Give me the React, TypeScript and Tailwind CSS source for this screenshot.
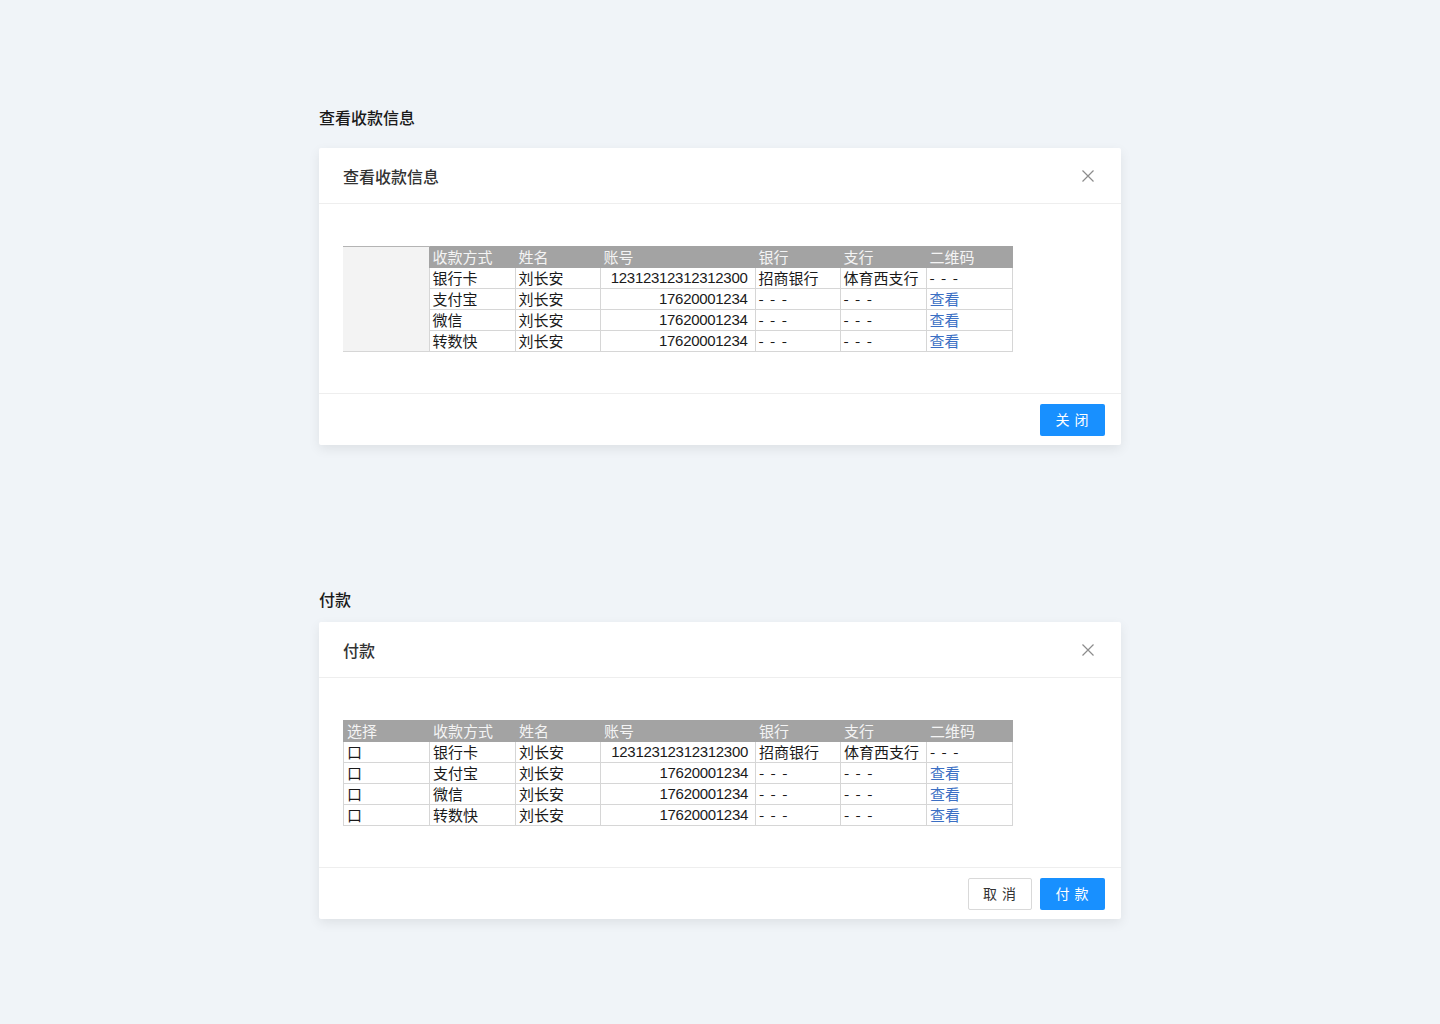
import React from 'react';

type Row = { method: string; name: string; account: string; bank: string; branch: string; qr: string };

const rows: Row[] = [
  { method: '银行卡', name: '刘长安', account: '12312312312312300', bank: '招商银行', branch: '体育西支行', qr: '- - -' },
  { method: '支付宝', name: '刘长安', account: '17620001234', bank: '- - -', branch: '- - -', qr: '查看' },
  { method: '微信', name: '刘长安', account: '17620001234', bank: '- - -', branch: '- - -', qr: '查看' },
  { method: '转数快', name: '刘长安', account: '17620001234', bank: '- - -', branch: '- - -', qr: '查看' },
];

const cell = 'h-[21px] p-0 pl-[3px] border border-[#d6d6d6] text-[15px] leading-[20px] text-[#1a1a1a] whitespace-nowrap overflow-hidden';
const head = 'h-[21px] p-0 pl-[3px] border border-[#a3a3a3] bg-[#a3a3a3] text-[15px] leading-[20px] text-[#f4f4f4] font-normal text-left whitespace-nowrap';

function CloseIcon() {
  return (
    <svg width="14" height="14" viewBox="0 0 14 14" fill="none" stroke="#8c8c8c" strokeWidth="1.2">
      <path d="M1.5 1.5 L12.5 12.5 M12.5 1.5 L1.5 12.5" />
    </svg>
  );
}

function Text({ v }: { v: string }) {
  if (v === '查看') return <span className="text-[#3b6fc4]">查看</span>;
  if (v === '- - -') return <span className="tracking-[1.5px]">- - -</span>;
  return <>{v}</>;
}

function PayTable({ selectable }: { selectable: boolean }) {
  return (
    <table className="border-collapse table-fixed w-[669px] font-['Noto_Sans_CJK_SC','Noto_Sans',sans-serif]">
      <colgroup>
        <col className="w-[86px]" />
        <col className="w-[86px]" />
        <col className="w-[85px]" />
        <col className="w-[155px]" />
        <col className="w-[85px]" />
        <col className="w-[86px]" />
        <col className="w-[86px]" />
      </colgroup>
      <tbody>
        <tr>
          {selectable ? (
            <th className={head}>选择</th>
          ) : (
            <td rowSpan={5} className="p-0 bg-[#f3f3f3] border-t border-t-[#b4b4b4] border-b border-b-[#d6d6d6]" />
          )}
          <th className={head}>收款方式</th>
          <th className={head}>姓名</th>
          <th className={head}>账号</th>
          <th className={head}>银行</th>
          <th className={head}>支行</th>
          <th className={head}>二维码</th>
        </tr>
        {rows.map((r, i) => (
          <tr key={i}>
            {selectable && <td className={cell}>口</td>}
            <td className={cell}>{r.method}</td>
            <td className={cell}>{r.name}</td>
            <td className={`${cell} text-right pr-[7px] font-['Liberation_Sans','Noto_Sans_CJK_SC',sans-serif] tracking-[-0.3px]`}>
              {r.account}
            </td>
            <td className={cell}><Text v={r.bank} /></td>
            <td className={cell}><Text v={r.branch} /></td>
            <td className={cell}><Text v={r.qr} /></td>
          </tr>
        ))}
      </tbody>
    </table>
  );
}

function Modal({
  title,
  selectable,
  children,
}: {
  title: string;
  selectable: boolean;
  children: React.ReactNode;
}) {
  return (
    <div className="bg-white rounded-[2px] shadow-[0_4px_12px_rgba(0,0,0,0.08)]">
      <div className="h-[56px] px-6 flex items-center justify-between border-b border-[#eeeeee]">
        <h3 className="text-[16px] font-medium text-[#333333]">{title}</h3>
        <button className="w-[14px] h-[14px] mr-[2px] flex items-center justify-center">
          <CloseIcon />
        </button>
      </div>
      <div className="h-[189px] px-6 pt-[42px]">
        <PayTable selectable={selectable} />
      </div>
      <div className="h-[52px] border-t border-[#eeeeee] px-4 flex items-center justify-end gap-2">
        {children}
      </div>
    </div>
  );
}

export default function App() {
  return (
    <div className="min-h-screen bg-[#f0f4f8] font-['Noto_Sans_CJK_SC','Noto_Sans',sans-serif]">
      <div className="w-[802px] mx-auto pt-[105px] pb-[105px]">
        <h2 className="text-[16px] leading-[24px] font-medium text-[#1a1a1a] mb-[19px]">查看收款信息</h2>
        <Modal title="查看收款信息" selectable={false}>
          <button className="w-[65px] h-[32px] rounded-[2px] bg-[#1890ff] text-white text-[14px] tracking-[1px]">
            关 闭
          </button>
        </Modal>

        <h2 className="text-[16px] leading-[24px] font-medium text-[#1a1a1a] mt-[142px] mb-[11px]">付款</h2>
        <Modal title="付款" selectable={true}>
          <button className="w-[64px] h-[32px] rounded-[2px] bg-white border border-[#d9d9d9] text-[#333333] text-[14px] tracking-[1px]">
            取 消
          </button>
          <button className="w-[65px] h-[32px] rounded-[2px] bg-[#1890ff] text-white text-[14px] tracking-[1px]">
            付 款
          </button>
        </Modal>
      </div>
    </div>
  );
}
